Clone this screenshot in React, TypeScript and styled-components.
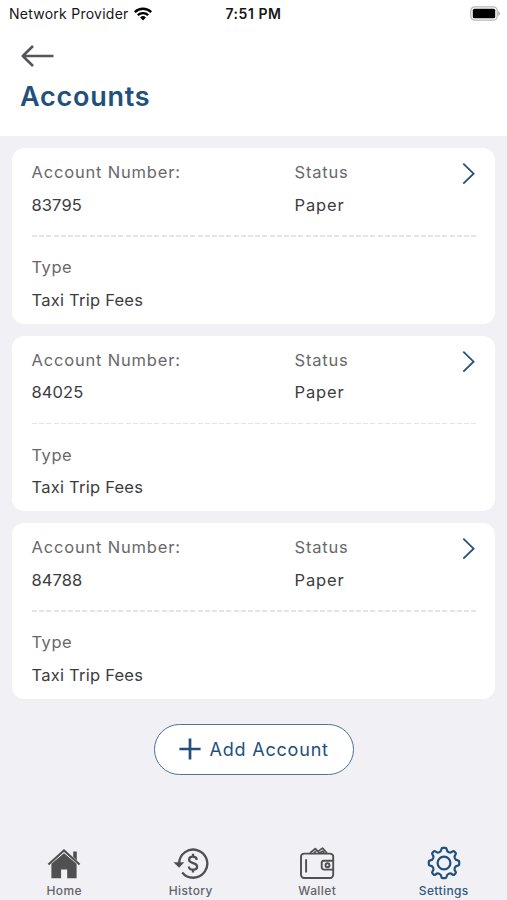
import React from "react";
import styled, { createGlobalStyle } from "styled-components";

const NAVY = "#22507c";
const GREY = "#505052";

const GlobalStyle = createGlobalStyle`
  * { box-sizing: border-box; }
  body { margin: 0; background: #f0f0f5; }
`;

const Screen = styled.div`
  width: 507px;
  height: 900px;
  display: flex;
  flex-direction: column;
  overflow: hidden;
  background: #f0f0f5;
  font-family: Inter, sans-serif;
`;

const Header = styled.header`
  height: 136px;
  background: #fff;
`;

const StatusBar = styled.div`
  height: 27px;
  padding: 0 6px 0 9px;
  display: grid;
  grid-template-columns: 1fr auto 1fr;
  align-items: center;
  font-size: 14px;
  line-height: 27px;
  color: #161616;
`;

const Carrier = styled.div`
  display: flex;
  align-items: center;
  gap: 5px;
  letter-spacing: 0.25px;
  white-space: nowrap;
`;

const Clock = styled.time`
  margin-right: 3px;
  font-weight: 600;
  letter-spacing: 0.55px;
`;

const BatterySlot = styled.div`
  display: flex;
  justify-content: flex-end;
`;

const TitleArea = styled.div`
  padding: 17px 20px 0;
  display: flex;
  flex-direction: column;
  align-items: flex-start;
`;

const IconButton = styled.button`
  display: flex;
  padding: 0;
  border: 0;
  background: none;
`;

const Title = styled.h1`
  margin: 11px 0 0;
  font-size: 27px;
  line-height: 36px;
  font-weight: 600;
  letter-spacing: 0.75px;
  color: ${NAVY};
`;

const List = styled.main`
  flex: 1;
  padding: 12px 12px 0;
  display: flex;
  flex-direction: column;
  align-items: center;
  gap: 12px;
`;

const Card = styled.section`
  width: 483px;
  height: 175.6px;
  padding: 8px 19px 0 19.5px;
  border-radius: 12px;
  background: #fff;
`;

const Summary = styled.div`
  height: 79px;
  display: grid;
  grid-template-columns: 263px 1fr 14px;
`;

const Divider = styled.div`
  height: 1.5px;
  background: repeating-linear-gradient(90deg, #e4e4e6 0 5px, transparent 5px 7.2px);
`;

const TypeRow = styled.div`
  padding-top: 14.5px;
`;

const Label = styled.div<{ $spacing?: number }>`
  font-size: 16.5px;
  line-height: 32.5px;
  letter-spacing: ${(p) => p.$spacing ?? 0}px;
  color: #68686a;
  white-space: nowrap;
`;

const Value = styled(Label)`
  color: #3c3c3e;
`;

const ChevronSlot = styled.div`
  padding-top: 5px;
  display: flex;
  align-items: flex-start;
`;

const AddButton = styled.button`
  width: 200px;
  height: 51px;
  margin-top: 13px;
  padding: 0 0 0 24px;
  display: flex;
  align-items: center;
  gap: 9px;
  border: 1.5px solid #4c7296;
  border-radius: 26px;
  background: #fff;
  color: ${NAVY};
  font-family: inherit;
  font-size: 18px;
  letter-spacing: 0.8px;
  white-space: nowrap;
`;

const TabBar = styled.nav`
  height: 60px;
  padding-left: 1px;
  display: grid;
  grid-template-columns: repeat(4, 126.5px);
  justify-content: center;
`;

const Tab = styled.a<{ $active?: boolean }>`
  padding-top: 4px;
  display: flex;
  flex-direction: column;
  align-items: center;
  color: ${(p) => (p.$active ? NAVY : GREY)};
`;

const TabLabel = styled.span<{ $active?: boolean }>`
  margin-top: -1px;
  font-size: 12px;
  line-height: 16px;
  font-weight: 500;
  letter-spacing: 0.4px;
  color: ${(p) => (p.$active ? "#315b84" : "#646468")};
`;

const WifiIcon = () => (
  <svg width="18" height="14" viewBox="0 0 18 14" fill="none" stroke="#000" strokeWidth="2.3">
    <path d="M.8 5.1a11.7 11.7 0 0 1 16.4 0M3.8 8.2a7.5 7.5 0 0 1 10.4 0" />
    <path d="M9 13.4 6.1 10.5a4.2 4.2 0 0 1 5.8 0Z" fill="#000" stroke="none" />
  </svg>
);

const BatteryIcon = () => (
  <svg width="31" height="15" viewBox="0 0 31 15">
    <rect x=".8" y=".8" width="26.4" height="13.4" rx="4" fill="#fff" stroke="#b8b8b8" strokeWidth="1.3" />
    <rect x="2.8" y="2.8" width="22.4" height="9.4" rx="1.5" fill="#000" />
    <path d="M28.6 5.4q2 2.1 0 4.2Z" fill="#aaa" stroke="#aaa" strokeWidth=".7" />
  </svg>
);

const BackIcon = () => (
  <svg width="34" height="24" viewBox="0 0 34 24" fill="none" stroke="#555557" strokeWidth="2.6">
    <path d="M33.5 12H2.8M13 2 2.8 12 13 22" strokeLinejoin="round" />
  </svg>
);

const Chevron = () => (
  <svg width="15" height="25" viewBox="0 0 15 25" fill="none" stroke={NAVY} strokeWidth="1.9">
    <path d="M1.4 2 12.4 12.7 1.4 23.4" />
  </svg>
);

const PlusIcon = () => (
  <svg width="22" height="22" viewBox="0 0 22 22" stroke={NAVY} strokeWidth="2.7">
    <path d="M11 .4v21.2M.4 11h21.2" />
  </svg>
);

const HomeIcon = () => (
  <svg width="36" height="40" viewBox="0 0 36 40" fill="currentColor">
    <path d="M18 9.3 30.6 19.8v14.4H21.2v-8.7h-6.1v8.7H5.4V19.8Z" />
    <path d="m2.4 20.4 15.6-14 15.6 14" fill="none" stroke="currentColor" strokeWidth="2" />
    <path d="M27.2 7.6h3.6v8.6l-3.6-3.2Z" />
  </svg>
);

const HistoryIcon = () => (
  <svg width="36" height="40" viewBox="0 0 36 40" fill="none" stroke="currentColor">
    <path d="M6.1 19.2a14.1 14.1 0 1 1 3.1 9.3" strokeWidth="2.3" />
    <path d="M.5 18.2h10.8l-5.2 5.5Z" fill="currentColor" stroke="none" />
    <path d="M23.8 15.8c-.5-4.2-7.7-4.2-7.7 0 0 4.3 8 2.3 8 6.7 0 4.3-7.9 4.3-8.3 0M20 9.8v3.1m0 12.6v3.1" strokeWidth="2.3" />
  </svg>
);

const WalletIcon = () => (
  <svg width="36" height="40" viewBox="0 0 36 40" fill="none" stroke="currentColor" strokeWidth="1.9" strokeLinejoin="round">
    <path d="M34.2 17.2v-4.4a3.2 3.2 0 0 0-3.2-3.2H5.2A3.2 3.2 0 0 0 2 12.8v18A3.2 3.2 0 0 0 5.2 34H31a3.2 3.2 0 0 0 3.2-3.2v-5.3" />
    <path d="M34.2 16.8H25a2.3 2.3 0 0 0-2.3 2.3v4.2a2.3 2.3 0 0 0 2.3 2.3h9.2ZM7.1 15.2v13.2" />
    <circle cx="28.5" cy="21.2" r="2" />
    <path d="m11 9 5.3-4.4 4.1 4.3M14.8 9l2.4-1.9M19.1 7.4l4.4-3.3L28 9M20.9 9l2.7-1.8 1.7 1.8" strokeWidth="1.7" />
  </svg>
);

const GearIcon = () => (
  <svg width="36" height="40" viewBox="-18 -19 36 40" fill="none" stroke="currentColor" strokeWidth="2.2" strokeLinejoin="round">
    <path d="M-1.2-15.2H1.2Q2.5-15.2 2.6-13.8C2.8-10.8 6.3-9.4 8.4-11.5Q9.6-12.4 10.4-11.5L11.5-10.4Q12.4-9.6 11.5-8.4C9.4-6.3 10.8-2.8 13.8-2.6Q15.2-2.5 15.2-1.2V1.2Q15.2 2.5 13.8 2.6C10.8 2.8 9.4 6.3 11.5 8.4Q12.4 9.6 11.5 10.4L10.4 11.5Q9.6 12.4 8.4 11.5C6.3 9.4 2.8 10.8 2.6 13.8Q2.5 15.2 1.2 15.2H-1.2Q-2.5 15.2-2.6 13.8C-2.8 10.8-6.3 9.4-8.4 11.5Q-9.6 12.4-10.4 11.5L-11.5 10.4Q-12.4 9.6-11.5 8.4C-9.4 6.3-10.8 2.8-13.8 2.6Q-15.2 2.5-15.2 1.2V-1.2Q-15.2-2.5-13.8-2.6C-10.8-2.8-9.4-6.3-11.5-8.4Q-12.4-9.6-11.5-10.4L-10.4-11.5Q-9.6-12.4-8.4-11.5C-6.3-9.4-2.8-10.8-2.6-13.8Q-2.5-15.2-1.2-15.2Z" />
    <circle r="6.4" />
  </svg>
);

const accounts = ["83795", "84025", "84788"];

const tabs = [
  { name: "Home", icon: <HomeIcon /> },
  { name: "History", icon: <HistoryIcon /> },
  { name: "Wallet", icon: <WalletIcon /> },
  { name: "Settings", icon: <GearIcon />, active: true },
];

const AccountCard = ({ number }: { number: string }) => (
  <Card>
    <Summary>
      <div>
        <Label $spacing={0.82}>Account Number:</Label>
        <Value $spacing={0.1}>{number}</Value>
      </div>
      <div>
        <Label $spacing={0.8}>Status</Label>
        <Value $spacing={0.85}>Paper</Value>
      </div>
      <ChevronSlot>
        <Chevron />
      </ChevronSlot>
    </Summary>
    <Divider />
    <TypeRow>
      <Label $spacing={0.5}>Type</Label>
      <Value $spacing={0.24}>Taxi Trip Fees</Value>
    </TypeRow>
  </Card>
);

export default function App() {
  return (
    <>
      <GlobalStyle />
      <Screen>
        <Header>
          <StatusBar>
            <Carrier>
              Network Provider <WifiIcon />
            </Carrier>
            <Clock>7:51 PM</Clock>
            <BatterySlot>
              <BatteryIcon />
            </BatterySlot>
          </StatusBar>
          <TitleArea>
            <IconButton aria-label="Back">
              <BackIcon />
            </IconButton>
            <Title>Accounts</Title>
          </TitleArea>
        </Header>
        <List>
          {accounts.map((number) => (
            <AccountCard key={number} number={number} />
          ))}
          <AddButton>
            <PlusIcon />
            Add Account
          </AddButton>
        </List>
        <TabBar>
          {tabs.map((tab) => (
            <Tab key={tab.name} $active={tab.active}>
              {tab.icon}
              <TabLabel $active={tab.active}>{tab.name}</TabLabel>
            </Tab>
          ))}
        </TabBar>
      </Screen>
    </>
  );
}
